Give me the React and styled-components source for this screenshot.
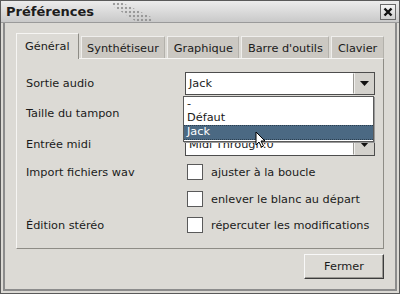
import React from "react";
import styled, { createGlobalStyle } from "styled-components";

const Global = createGlobalStyle`
  html, body { margin: 0; padding: 0; background: #dcdad5; }
  body { font-family: "DejaVu Sans", sans-serif; font-size: 11.3px; color: #1a1a1a; }
`;

const Window = styled.div`
  position: relative;
  width: 400px;
  height: 294px;
  box-sizing: border-box;
  background: #dcdad5;
  border: 1px solid #5a5a5a;
  display: flex;
  flex-direction: column;
  white-space: nowrap;
`;

const TitleBar = styled.div`
  height: 21px;
  display: flex;
  align-items: center;
  background: linear-gradient(#ececec, #c9c9c9);
  padding: 0 3px 0 5px;
  border-bottom: 1px solid #9a9a9a;
`;

const Title = styled.div`
  font-weight: bold;
  font-size: 13px;
  color: #1c1c1c;
`;

const Dots = styled.div`
  width: 40px;
  height: 20px;
  margin-left: 18px;
  background:
    radial-gradient(circle, #8a8a8a 1px, transparent 1.6px) 0 0 / 4px 4px;
  clip-path: polygon(0 0, 20% 0, 100% 80%, 100% 100%, 60% 100%, 0 20%);
  opacity: 0.8;
`;

const Spacer = styled.div` flex: 1; `;

const CloseBtn = styled.div`
  width: 14px;
  height: 14px;
  border: 1px solid #6a6a6a;
  background: linear-gradient(#f4f4f4, #d0d0d0);
  display: flex;
  align-items: center;
  justify-content: center;
`;

const Frame = styled.div`
  flex: 1;
  margin: 0 2px 2px 2px;
  border-left: 2px solid #8c8c8c;
  border-right: 2px solid #8c8c8c;
  border-bottom: 2px solid #8c8c8c;
  padding: 10px 11px 0 11px;
  display: flex;
  flex-direction: column;
`;

const TabRow = styled.div`
  display: flex;
  align-items: flex-end;
  height: 25px;
  gap: 2px;
`;

const Tab = styled.div`
  height: ${p => (p.$active ? 26 : 22)}px;
  box-sizing: border-box;
  padding: ${p => (p.$active ? 0 : 1)}px ${p => p.$pad}px 0;
  display: flex;
  align-items: center;
  background: ${p => (p.$active ? "#dcdad5" : "#cbc8c2")};
  border: 1px solid ${p => (p.$active ? "#f6f5f3" : "#efeeec")};
  border-right-color: ${p => (p.$active ? "#8e8c86" : "#b3b1ab")};
  border-bottom: none;
  margin-bottom: ${p => (p.$active ? -1 : 0)}px;
  z-index: ${p => (p.$active ? 1 : 0)};
  position: relative;
`;

const Panel = styled.div`
  border: 1px solid #f6f5f3;
  border-right-color: #8e8c86;
  border-bottom-color: #8e8c86;
  height: 191px;
  box-sizing: border-box;
  padding: 13px 10px 0 9px;
  display: grid;
  grid-template-columns: 159px 1fr;
  grid-template-rows: 22px 39px 22px 34px 20px 32px;
  align-items: center;
`;

const Label = styled.div``;

const ComboWrap = styled.div`
  display: flex;
  height: 23px;
  width: 190px;
  box-sizing: border-box;
  border: 1px solid #4d4d4d;
`;

const ComboField = styled.div`
  flex: 1;
  background: #fff;
  border: 1px solid #fff;
  border-right: 1px solid #9a9893;
  display: flex;
  align-items: center;
  padding-left: 2px;
`;

const ComboArrow = styled.div`
  width: 19px;
  background: #d3d1cc;
  display: flex;
  align-items: center;
  justify-content: center;
  border-left: 1px solid #f0efed;
`;

const Check = styled.div`
  display: flex;
  align-items: center;
  gap: 8px;
  padding-left: 2px;
`;

const Box = styled.div`
  width: 14px;
  height: 14px;
  border: 1px solid #5a5a5a;
  background: #fff;
`;

const Popup = styled.div`
  position: absolute;
  left: 182px;
  top: 95px;
  width: 191px;
  height: 46px;
  box-sizing: border-box;
  background: #fff;
  border: 1px solid #5a5a5a;
  box-shadow: 1px 1px 0 #9a9a9a;
  z-index: 5;
  display: flex;
  flex-direction: column;
`;

const Item = styled.div`
  height: 14px;
  line-height: 14px;
  box-sizing: border-box;
  padding-left: 3px;
  background: ${p => (p.$sel ? "#4b6983" : "transparent")};
  color: ${p => (p.$sel ? "#fff" : "#1a1a1a")};
  ${p => p.$sel && "border-top: 1px dotted #2c3e4e; border-bottom: 1px dotted #2c3e4e; line-height: 12px; height: 15px;"}
`;

const Footer = styled.div`
  display: flex;
  justify-content: flex-end;
  padding: 5px 0 0 0;
`;

const Button = styled.div`
  width: 80px;
  height: 25px;
  box-sizing: border-box;
  border: 1px solid #3c3c3c;
  border-top-color: #f8f8f8;
  border-left-color: #f8f8f8;
  box-shadow: inset -1px -1px 0 #9a9893;
  background: #dcdad5;
  display: flex;
  align-items: center;
  justify-content: center;
`;

const Cursor = styled.svg`
  position: absolute;
  left: 254px;
  top: 130px;
  z-index: 10;
`;

const Arrow = () => (
  <svg width="9" height="5" viewBox="0 0 9 5"><path d="M0 0h9L4.5 5z" fill="#111" /></svg>
);

export default function App() {
  return (
    <>
      <Global />
      <Window>
        <TitleBar>
          <Title>Préférences</Title>
          <Dots />
          <Spacer />
          <CloseBtn>
            <svg width="10" height="10" viewBox="0 0 10 10">
              <path d="M1.5 1.5L8.5 8.5M8.5 1.5L1.5 8.5" stroke="#111" strokeWidth="2.4" />
            </svg>
          </CloseBtn>
        </TitleBar>
        <Frame>
          <TabRow>
            <Tab $active $pad={8}>Général</Tab>
            <Tab $pad={5.5}>Synthétiseur</Tab>
            <Tab $pad={5.5}>Graphique</Tab>
            <Tab $pad={5.5}>Barre d'outils</Tab>
            <Tab $pad={5.5}>Clavier</Tab>
          </TabRow>
          <Panel>
            <Label>Sortie audio</Label>
            <ComboWrap>
              <ComboField>Jack</ComboField>
              <ComboArrow><Arrow /></ComboArrow>
            </ComboWrap>
            <Label>Taille du tampon</Label>
            <div />
            <Label>Entrée midi</Label>
            <ComboWrap>
              <ComboField>Midi Through:0</ComboField>
              <ComboArrow><Arrow /></ComboArrow>
            </ComboWrap>
            <Label>Import fichiers wav</Label>
            <Check><Box />ajuster à la boucle</Check>
            <div />
            <Check><Box />enlever le blanc au départ</Check>
            <Label>Édition stéréo</Label>
            <Check><Box />répercuter les modifications</Check>
          </Panel>
          <Footer>
            <Button>Fermer</Button>
          </Footer>
        </Frame>
        <Popup>
          <Item>-</Item>
          <Item>Défaut</Item>
          <Item $sel>Jack</Item>
        </Popup>
        <Cursor width="12" height="18" viewBox="0 0 12 18">
          <path d="M1 1v13l3-3 2.5 5 2-1-2.5-5h4z" fill="#fff" stroke="#000" strokeWidth="1" />
        </Cursor>
      </Window>
    </>
  );
}
